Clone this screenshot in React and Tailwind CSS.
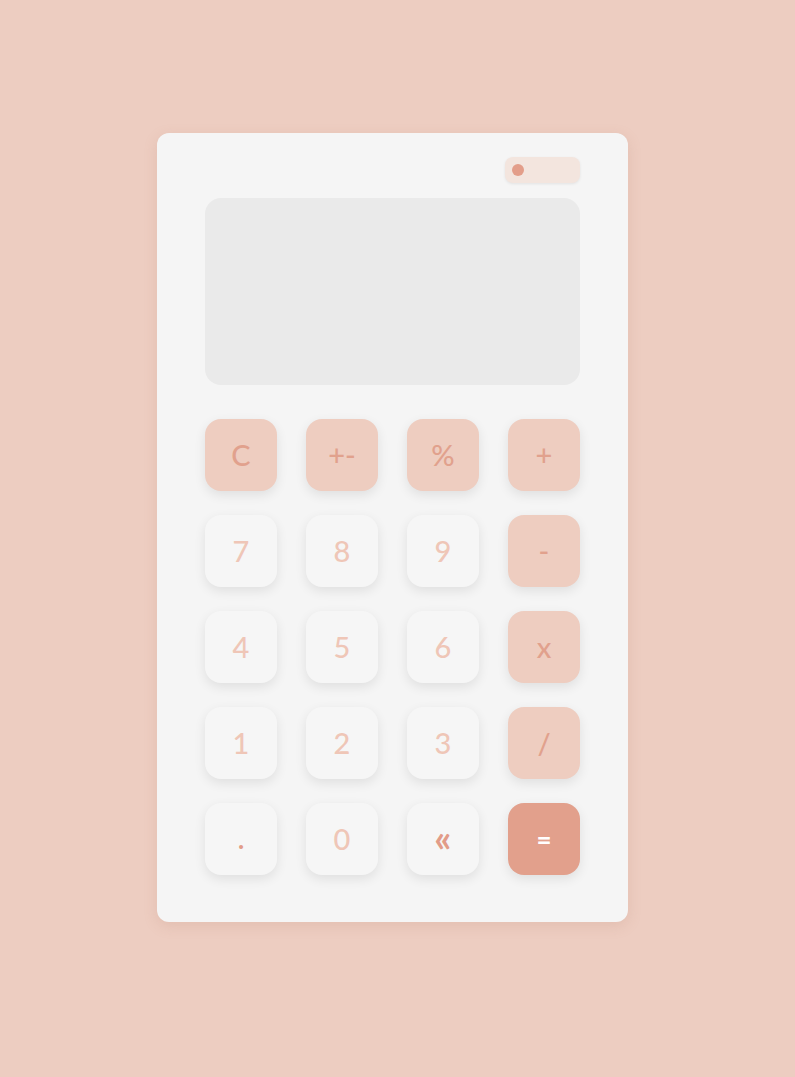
import { useState } from 'react';

const keys = [
  ['C', 'op'], ['+-', 'op'], ['%', 'op'], ['+', 'op'],
  ['7', 'num'], ['8', 'num'], ['9', 'num'], ['-', 'op'],
  ['4', 'num'], ['5', 'num'], ['6', 'num'], ['x', 'op'],
  ['1', 'num'], ['2', 'num'], ['3', 'num'], ['/', 'op'],
  ['.', 'dot'], ['0', 'num'], ['«', 'dot'], ['=', 'eq'],
];

const styles = {
  op: 'bg-[#eecdc0] text-[#e1a18d]',
  num: 'bg-[#f6f6f6] text-[#efc6b7]',
  dot: 'bg-[#f6f6f6] text-[#e29c88]',
  eq: 'bg-[#e2a08c] text-white',
};

export default function App() {
  const [display, setDisplay] = useState('');

  return (
    <div className="min-h-[1077px] bg-[#edcdc1] flex justify-center pr-[10px] pt-[133px] font-['Lato',sans-serif]">
      <div className="w-[471px] h-[789px] bg-[#f5f5f5] rounded-xl shadow-[0_4px_14px_rgba(180,120,100,0.18)] px-12 pt-6">
        {/* Toggle */}
        <div className="flex justify-end">
          <div className="w-[75px] h-[26px] rounded-lg bg-[#f3e5de] shadow-[0_1px_3px_rgba(0,0,0,0.08)] flex items-center pl-[7px]">
            <div className="w-3 h-3 rounded-full bg-[#e39e8a]" />
          </div>
        </div>

        {/* Display */}
        <div className="mt-[15px] h-[187px] rounded-2xl bg-[#eaeaea] flex items-end justify-end p-5 text-4xl text-[#e1a18d]">
          {display}
        </div>

        {/* Keypad */}
        <div className="mt-[34px] grid grid-cols-4 gap-x-[29px] gap-y-6">
          {keys.map(([k, type]) => (
            <button
              key={k}
              onClick={() => setDisplay(k === 'C' ? '' : display + k)}
              className={`w-[72px] h-[72px] rounded-2xl flex items-center justify-center shadow-[0_4px_12px_rgba(0,0,0,0.09)] ${styles[type]} ${
                k === '«' ? 'text-[38px] font-bold pb-1' : type === 'eq' || k === '.' ? 'text-[26px] font-bold' : 'text-[29px] font-medium'
              }`}
            >
              {k}
            </button>
          ))}
        </div>
      </div>
    </div>
  );
}
